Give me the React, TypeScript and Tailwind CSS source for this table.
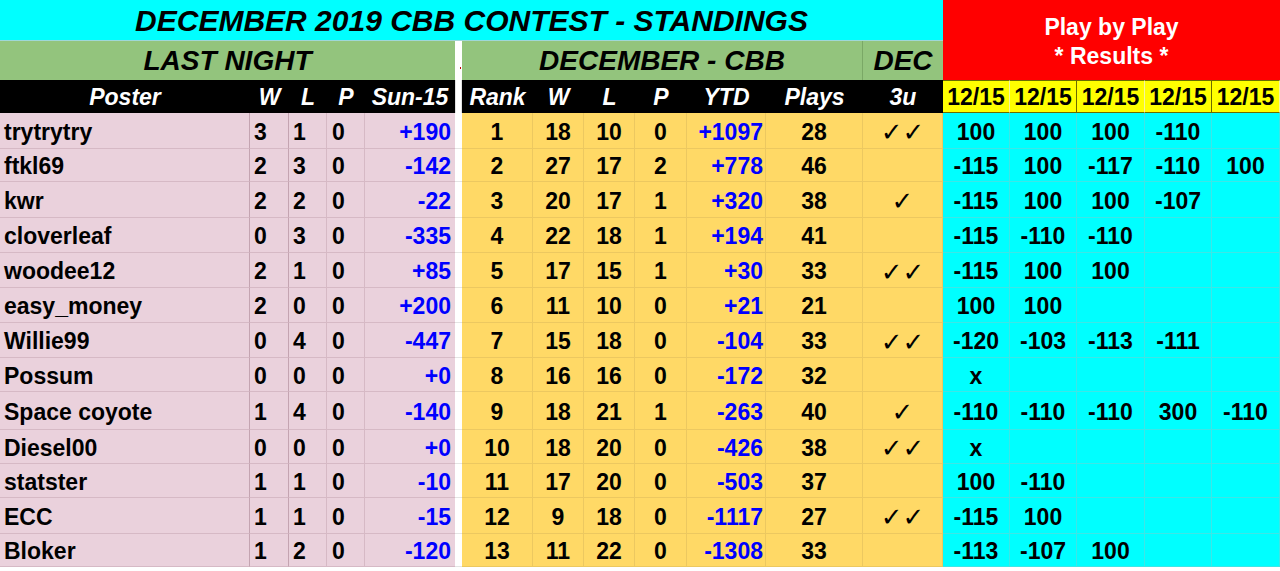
import React from "react";

type Row = {
  name: string;
  w: number;
  l: number;
  p: number;
  sun: string;
  rank: number;
  dw: number;
  dl: number;
  dp: number;
  ytd: string;
  plays: number;
  dec: string;
  pbp: string[];
};

const rows: Row[] = [
  { name: "trytrytry", w: 3, l: 1, p: 0, sun: "+190", rank: 1, dw: 18, dl: 10, dp: 0, ytd: "+1097", plays: 28, dec: "✓✓", pbp: ["100", "100", "100", "-110", ""] },
  { name: "ftkl69", w: 2, l: 3, p: 0, sun: "-142", rank: 2, dw: 27, dl: 17, dp: 2, ytd: "+778", plays: 46, dec: "", pbp: ["-115", "100", "-117", "-110", "100"] },
  { name: "kwr", w: 2, l: 2, p: 0, sun: "-22", rank: 3, dw: 20, dl: 17, dp: 1, ytd: "+320", plays: 38, dec: "✓", pbp: ["-115", "100", "100", "-107", ""] },
  { name: "cloverleaf", w: 0, l: 3, p: 0, sun: "-335", rank: 4, dw: 22, dl: 18, dp: 1, ytd: "+194", plays: 41, dec: "", pbp: ["-115", "-110", "-110", "", ""] },
  { name: "woodee12", w: 2, l: 1, p: 0, sun: "+85", rank: 5, dw: 17, dl: 15, dp: 1, ytd: "+30", plays: 33, dec: "✓✓", pbp: ["-115", "100", "100", "", ""] },
  { name: "easy_money", w: 2, l: 0, p: 0, sun: "+200", rank: 6, dw: 11, dl: 10, dp: 0, ytd: "+21", plays: 21, dec: "", pbp: ["100", "100", "", "", ""] },
  { name: "Willie99", w: 0, l: 4, p: 0, sun: "-447", rank: 7, dw: 15, dl: 18, dp: 0, ytd: "-104", plays: 33, dec: "✓✓", pbp: ["-120", "-103", "-113", "-111", ""] },
  { name: "Possum", w: 0, l: 0, p: 0, sun: "+0", rank: 8, dw: 16, dl: 16, dp: 0, ytd: "-172", plays: 32, dec: "", pbp: ["x", "", "", "", ""] },
  { name: "Space coyote", w: 1, l: 4, p: 0, sun: "-140", rank: 9, dw: 18, dl: 21, dp: 1, ytd: "-263", plays: 40, dec: "✓", pbp: ["-110", "-110", "-110", "300", "-110"] },
  { name: "Diesel00", w: 0, l: 0, p: 0, sun: "+0", rank: 10, dw: 18, dl: 20, dp: 0, ytd: "-426", plays: 38, dec: "✓✓", pbp: ["x", "", "", "", ""] },
  { name: "statster", w: 1, l: 1, p: 0, sun: "-10", rank: 11, dw: 17, dl: 20, dp: 0, ytd: "-503", plays: 37, dec: "", pbp: ["100", "-110", "", "", ""] },
  { name: "ECC", w: 1, l: 1, p: 0, sun: "-15", rank: 12, dw: 9, dl: 18, dp: 0, ytd: "-1117", plays: 27, dec: "✓✓", pbp: ["-115", "100", "", "", ""] },
  { name: "Bloker", w: 1, l: 2, p: 0, sun: "-120", rank: 13, dw: 11, dl: 22, dp: 0, ytd: "-1308", plays: 33, dec: "", pbp: ["-113", "-107", "100", "", ""] },
];

const pink = "flex items-center pt-[3px] bg-[#ead1dc] border-b border-r border-[#d6b9c5]";
const gold = "flex items-center justify-center pt-[3px] bg-[#ffd966] border-b border-r border-[#ecc860]";
const cyan = "flex items-center justify-center pt-[3px] bg-[#00ffff] border-b border-r border-[#3ee6e6]";
const head = "flex items-center justify-center pt-[1px] bg-black text-white italic";
const blue = "text-[#0000ff]";

export default function App() {
  return (
    <div
      className="w-[1280px] h-[571px] bg-white overflow-hidden font-bold text-black"
      style={{ fontFamily: '"Liberation Sans", Arial, sans-serif' }}
    >
      <div className="grid grid-cols-[250px_39px_38px_38px_90px_7px_71px_51px_51px_52px_79px_97px_80px_67px_67px_68px_67px_68px] grid-rows-[41px_39px_33px_36px_33px_36px_35px_35px_35px_35px_34px_38px_34px_34px_36px_33px] text-[23px] leading-none">
        {/* title */}
        <div className="col-span-13 flex items-center justify-center pt-[1px] bg-[#00ffff] border-b border-[#9fd8d8] text-[30px] italic">
          DECEMBER 2019 CBB CONTEST - STANDINGS
        </div>
        <div className="col-span-5 row-span-2 flex flex-col items-center justify-center gap-[6px] pt-[4px] bg-[#ff0000] text-white text-[23px]">
          <span>Play by Play</span>
          <span>* Results *</span>
        </div>

        {/* section headers */}
        <div className="col-span-5 flex items-center justify-center pt-[1px] bg-[#93c47d] text-[28px] italic">LAST NIGHT</div>
        <div className="bg-white relative">
          <span className="absolute left-[5px] top-[26px] w-[1px] h-[2px] bg-[#c00000]" />
        </div>
        <div className="col-span-6 flex items-center justify-center pt-[1px] bg-[#93c47d] border-r border-[#7aa866] text-[28px] italic">
          DECEMBER - CBB
        </div>
        <div className="flex items-center justify-center pt-[1px] bg-[#93c47d] text-[28px] italic">DEC</div>

        {/* column headers */}
        <div className={head}>Poster</div>
        <div className={head}>W</div>
        <div className={head}>L</div>
        <div className={head}>P</div>
        <div className={head}>Sun-15</div>
        <div className="bg-white border-x border-[#e0e0e0]" />
        <div className={head}>Rank</div>
        <div className={head}>W</div>
        <div className={head}>L</div>
        <div className={head}>P</div>
        <div className={head}>YTD</div>
        <div className={head}>Plays</div>
        <div className={head}>3u</div>
        {[0, 1, 2, 3, 4].map((i) => (
          <div
            key={i}
            className={
              "flex items-center justify-center pt-[1px] bg-[#ffff00] border-y border-[#6b6b00] " +
              (i === 1 || i === 3 ? "border-r border-r-[#6b6b00]" : "border-r border-r-[#f4f4a0]")
            }
          >
            12/15
          </div>
        ))}

        {/* data */}
        {rows.map((r) => (
          <React.Fragment key={r.name}>
            <div className={pink + " pl-[4px] border-r-[#c4a4b1]"}>{r.name}</div>
            <div className={pink + " pl-[4px] border-r-[#c4a4b1]"}>{r.w}</div>
            <div className={pink + " pl-[4px]"}>{r.l}</div>
            <div className={pink + " pl-[5px]"}>{r.p}</div>
            <div className={pink + " justify-end pr-[4px] border-r-0 " + blue}>{r.sun}</div>
            <div className="bg-white border-b border-[#e4e4e4]" />
            <div className={gold + " bg-[#f1c232] border-[#e0b434]"}>{r.rank}</div>
            <div className={gold}>{r.dw}</div>
            <div className={gold}>{r.dl}</div>
            <div className={gold}>{r.dp}</div>
            <div className={gold + " justify-end pr-[2px] " + blue}>{r.ytd}</div>
            <div className={gold}>{r.plays}</div>
            <div className={gold + " font-normal text-[26px]"} style={{ fontFamily: '"DejaVu Sans", sans-serif' }}>
              {r.dec}
            </div>
            {r.pbp.map((v, i) => (
              <div key={i} className={cyan}>
                {v}
              </div>
            ))}
          </React.Fragment>
        ))}
      </div>
    </div>
  );
}
